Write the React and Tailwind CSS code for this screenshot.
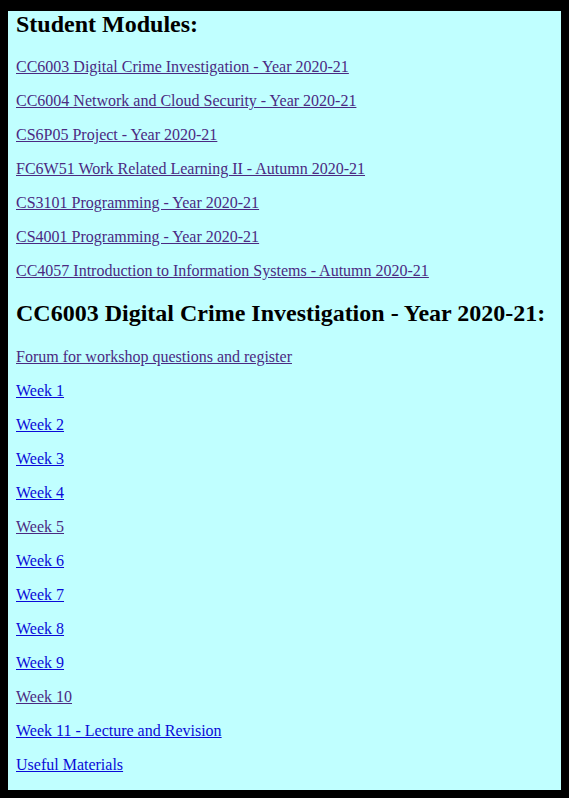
const modules = [
  { label: 'CC6003 Digital Crime Investigation - Year 2020-21', visited: true },
  { label: 'CC6004 Network and Cloud Security - Year 2020-21', visited: true },
  { label: 'CS6P05 Project - Year 2020-21', visited: true },
  { label: 'FC6W51 Work Related Learning II - Autumn 2020-21', visited: true },
  { label: 'CS3101 Programming - Year 2020-21', visited: true },
  { label: 'CS4001 Programming - Year 2020-21', visited: true },
  { label: 'CC4057 Introduction to Information Systems - Autumn 2020-21', visited: true },
];

const topics = [
  { label: 'Forum for workshop questions and register', visited: true },
  { label: 'Week 1', visited: false },
  { label: 'Week 2', visited: false },
  { label: 'Week 3', visited: false },
  { label: 'Week 4', visited: false },
  { label: 'Week 5', visited: true },
  { label: 'Week 6', visited: false },
  { label: 'Week 7', visited: false },
  { label: 'Week 8', visited: false },
  { label: 'Week 9', visited: false },
  { label: 'Week 10', visited: true },
  { label: 'Week 11 - Lecture and Revision', visited: false },
  { label: 'Useful Materials', visited: false },
];

function LinkItem({ label, visited }) {
  return (
    <p className="my-4 text-base leading-[18px]">
      <a
        href="#"
        onClick={(e) => e.preventDefault()}
        className={visited ? 'underline text-[#4b2a82]' : 'underline text-[#0a0ad8]'}
      >
        {label}
      </a>
    </p>
  );
}

export default function App() {
  return (
    <div className="min-h-[798px] bg-black pt-[11px] pb-[9px] px-2 font-['Liberation_Serif','Times_New_Roman',serif] text-black">
      <div className="bg-[#c0ffff] px-2 flow-root">
        <h2 className="text-2xl font-bold leading-[27px] mt-0 mb-[20px]">Student Modules:</h2>
        {modules.map((m) => (
          <LinkItem key={m.label} {...m} />
        ))}
        <h2 className="text-2xl font-bold leading-[27px] mt-[20px] mb-[21px]">
          CC6003 Digital Crime Investigation - Year 2020-21:
        </h2>
        {topics.map((t) => (
          <LinkItem key={t.label} {...t} />
        ))}
      </div>
    </div>
  );
}
